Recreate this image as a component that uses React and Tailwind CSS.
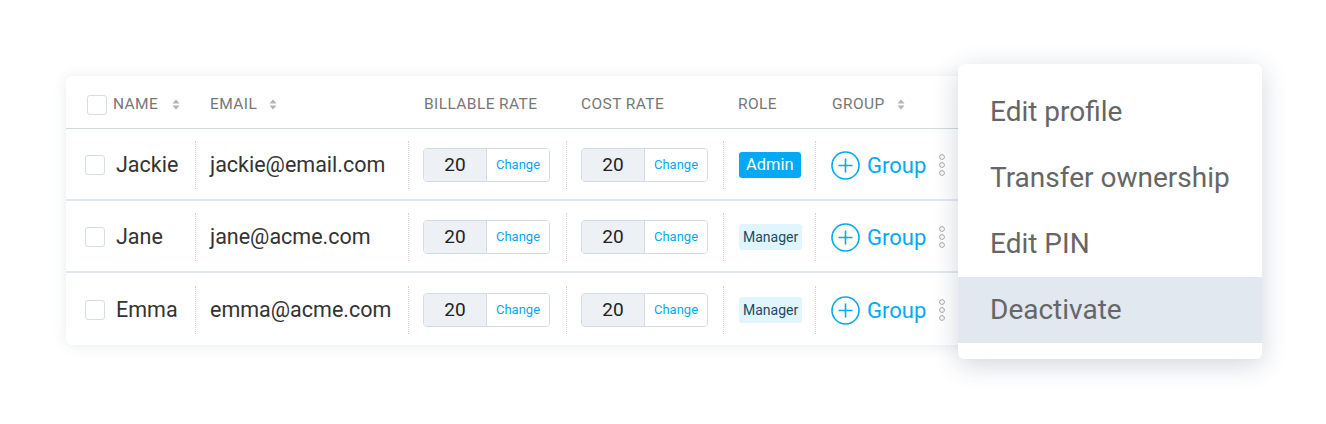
const people = [
  { name: 'Jackie', email: 'jackie@email.com', role: 'Admin' },
  { name: 'Jane', email: 'jane@acme.com', role: 'Manager' },
  { name: 'Emma', email: 'emma@acme.com', role: 'Manager' },
]

const menu = ['Edit profile', 'Transfer ownership', 'Edit PIN', 'Deactivate']

function SortIcon() {
  return (
    <svg width="8" height="11" viewBox="0 0 8 11" className="shrink-0">
      <path d="M4 0.5 L7.5 4.5 H0.5 Z" fill="#b3b3b3" />
      <path d="M4 10.5 L7.5 6.5 H0.5 Z" fill="#b3b3b3" />
    </svg>
  )
}

function Checkbox() {
  return <div className="w-[20px] h-[20px] rounded-[3px] border border-[#d5dde5] bg-white shrink-0" />
}

function Sep() {
  return <div className="h-[48px] border-l border-dotted border-[#cdd4db] shrink-0" />
}

function RateInput() {
  return (
    <div className="flex h-[34px] w-[127px] rounded-[4px] border border-[#d3dbe3] overflow-hidden">
      <div className="w-[63px] bg-[#edf1f5] border-r border-[#d3dbe3] flex items-center justify-center text-[19px] text-[#222]">
        20
      </div>
      <div className="flex-1 bg-white flex items-center justify-center text-[13px] text-[#03a9f4]">Change</div>
    </div>
  )
}

function RoleBadge({ role }) {
  if (role === 'Admin') {
    return (
      <span className="inline-flex items-center h-[26px] px-[7px] rounded-[3px] bg-[#03a9f4] text-white text-[16.5px]">
        Admin
      </span>
    )
  }
  return (
    <span className="inline-flex items-center h-[26px] px-[4px] rounded-[3px] bg-[#e1f5fe] text-[#1d4b63] text-[14px]">
      Manager
    </span>
  )
}

function PlusCircle() {
  return (
    <svg width="29" height="29" viewBox="0 0 29 29" className="shrink-0">
      <circle cx="14.5" cy="14.5" r="13.5" fill="none" stroke="#03a9f4" strokeWidth="1.6" />
      <path d="M14.5 7.5 V21.5 M7.5 14.5 H21.5" stroke="#03a9f4" strokeWidth="1.6" />
    </svg>
  )
}

function MoreDots() {
  return (
    <svg width="8" height="22" viewBox="0 0 8 22" className="shrink-0">
      <circle cx="4" cy="3" r="2.4" fill="none" stroke="#a8a8a8" strokeWidth="1" />
      <circle cx="4" cy="11" r="2.4" fill="none" stroke="#a8a8a8" strokeWidth="1" />
      <circle cx="4" cy="19" r="2.4" fill="none" stroke="#a8a8a8" strokeWidth="1" />
    </svg>
  )
}

export default function App() {
  return (
    <div className="relative w-[1326px] h-[424px] bg-white font-['Roboto',sans-serif] overflow-hidden">
      <div className="pt-[76px] pl-[66px]">
        <div className="w-[910px] rounded-[6px] bg-white shadow-[0_1px_14px_rgba(40,60,90,0.10)]">
          {/* header */}
          <div className="flex items-center h-[53px] pt-[5px] border-b border-[#cfd9e3] text-[15.5px] text-[#777] tracking-[0.4px]">
            <div className="w-[129px] pl-[21px] flex items-center">
              <Checkbox />
              <span className="ml-[6px]">NAME</span>
              <span className="ml-[14px]"><SortIcon /></span>
            </div>
            <div className="w-[213px] pl-[15px] flex items-center">
              <span>EMAIL</span>
              <span className="ml-[12px]"><SortIcon /></span>
            </div>
            <div className="w-[158px] pl-[16px]">BILLABLE RATE</div>
            <div className="w-[157px] pl-[15px]">COST RATE</div>
            <div className="w-[92px] pl-[15px]">ROLE</div>
            <div className="flex-1 pl-[17px] flex items-center">
              <span>GROUP</span>
              <span className="ml-[12px]"><SortIcon /></span>
            </div>
          </div>

          {/* rows */}
          {people.map((p, i) => (
            <div
              key={p.email}
              className={`flex items-center h-[72px] pt-[2px] ${i < people.length - 1 ? 'border-b-2 border-[#e3e8ee]' : ''}`}
            >
              <div className="w-[129px] pl-[19px] flex items-center">
                <Checkbox />
                <span className="ml-[11px] text-[21.5px] text-[#333]">{p.name}</span>
              </div>
              <Sep />
              <div className="w-[212px] pl-[14px] text-[21.5px] text-[#333]">{p.email}</div>
              <Sep />
              <div className="w-[157px] pl-[14px]">
                <RateInput />
              </div>
              <Sep />
              <div className="w-[156px] pl-[14px]">
                <RateInput />
              </div>
              <Sep />
              <div className="w-[91px] pl-[15px]">
                <RoleBadge role={p.role} />
              </div>
              <Sep />
              <div className="flex-1 pl-[15px] flex items-center">
                <PlusCircle />
                <span className="ml-[7px] text-[22px] text-[#03a9f4]">Group</span>
                <span className="ml-[12px] flex"><MoreDots /></span>
              </div>
            </div>
          ))}
        </div>
      </div>

      {/* row actions menu */}
      <div className="absolute left-[958px] top-[64px] w-[304px] pt-[15px] pb-[16px] rounded-[6px] bg-white shadow-[0_6px_26px_rgba(30,50,80,0.20)]">
        {menu.map((label, i) => (
          <div
            key={label}
            className={`h-[66px] pl-[32px] flex items-center text-[28px] text-[#666] ${i === 3 ? 'bg-[#e1e8ef]' : ''}`}
          >
            {label}
          </div>
        ))}
      </div>
    </div>
  )
}
